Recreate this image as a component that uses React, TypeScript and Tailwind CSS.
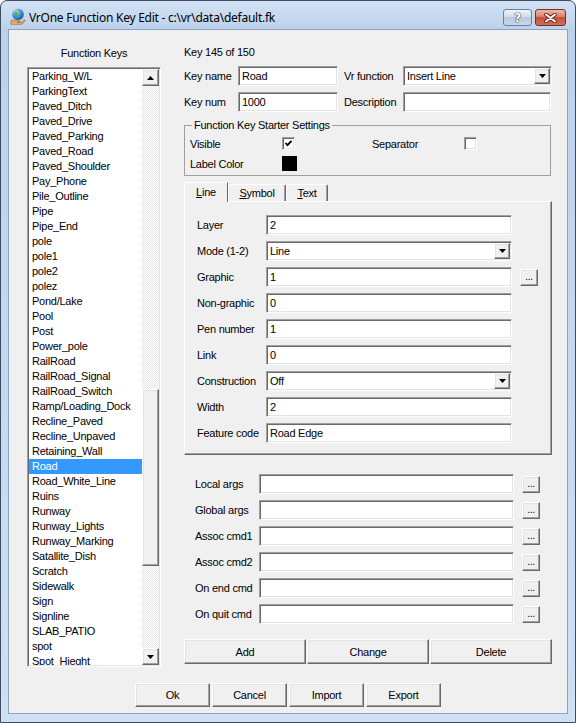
import React from "react";

// classic 3D edges
const sunken =
  "border border-t-[#a0a0a0] border-l-[#a0a0a0] border-b-white border-r-white shadow-[inset_1px_1px_0_#696969,inset_-1px_-1px_0_#e3e3e3]";
const raised =
  "border border-t-white border-l-white border-b-[#696969] border-r-[#696969] shadow-[inset_-1px_-1px_0_#a0a0a0,inset_1px_1px_0_#e3e3e3] bg-[#f0f0f0]";

const keys = [
  "Parking_W/L",
  "ParkingText",
  "Paved_Ditch",
  "Paved_Drive",
  "Paved_Parking",
  "Paved_Road",
  "Paved_Shoulder",
  "Pay_Phone",
  "Pile_Outline",
  "Pipe",
  "Pipe_End",
  "pole",
  "pole1",
  "pole2",
  "polez",
  "Pond/Lake",
  "Pool",
  "Post",
  "Power_pole",
  "RailRoad",
  "RailRoad_Signal",
  "RailRoad_Switch",
  "Ramp/Loading_Dock",
  "Recline_Paved",
  "Recline_Unpaved",
  "Retaining_Wall",
  "Road",
  "Road_White_Line",
  "Ruins",
  "Runway",
  "Runway_Lights",
  "Runway_Marking",
  "Satallite_Dish",
  "Scratch",
  "Sidewalk",
  "Sign",
  "Signline",
  "SLAB_PATIO",
  "spot",
  "Spot_Hieght",
];

const lineFields = [
  { label: "Layer", value: "2" },
  { label: "Mode (1-2)", value: "Line", combo: true },
  { label: "Graphic", value: "1", more: true },
  { label: "Non-graphic", value: "0" },
  { label: "Pen number", value: "1" },
  { label: "Link", value: "0" },
  { label: "Construction", value: "Off", combo: true },
  { label: "Width", value: "2" },
  { label: "Feature code", value: "Road Edge" },
];

const cmdRows = [
  "Local args",
  "Global args",
  "Assoc cmd1",
  "Assoc cmd2",
  "On end cmd",
  "On quit cmd",
];

function Tri({ up }: { up?: boolean }) {
  return (
    <svg width="7" height="4" viewBox="0 0 7 4">
      <path d={up ? "M3.5 0L7 4H0z" : "M0 0h7L3.5 4z"} fill="#000" />
    </svg>
  );
}

function TextBox({ value, className = "" }: { value?: string; className?: string }) {
  return (
    <div className={`${sunken} bg-white h-[20px] flex items-center pl-[3px] whitespace-nowrap ${className}`}>
      {value}
    </div>
  );
}

function Combo({ value, className = "" }: { value: string; className?: string }) {
  return (
    <div className={`${sunken} bg-white h-[20px] flex items-center ${className}`}>
      <span className="flex-1 pl-[3px]">{value}</span>
      <div className={`${raised} w-[16px] h-[16px] mr-[1px] flex items-center justify-center`}>
        <Tri />
      </div>
    </div>
  );
}

function More() {
  return (
    <div className={`${raised} w-[18px] h-[17px] flex items-end justify-center text-[10px] leading-[10px] pb-[3px]`}>
      ...
    </div>
  );
}

function CheckBox({ checked }: { checked?: boolean }) {
  return (
    <div className={`${sunken} bg-white w-[13px] h-[13px] flex items-center justify-center`}>
      {checked && (
        <svg width="9" height="9" viewBox="0 0 9 9">
          <path d="M1.5 4l2 2.2L7.5 1.8" stroke="#000" strokeWidth="1.8" fill="none" />
        </svg>
      )}
    </div>
  );
}

function AppIcon() {
  return (
    <svg width="16" height="17" viewBox="0 0 16 17">
      <defs>
        <radialGradient id="globe" cx="0.35" cy="0.3" r="0.8">
          <stop offset="0" stopColor="#bfe3ff" />
          <stop offset="0.5" stopColor="#3b8ee0" />
          <stop offset="1" stopColor="#1c4f9c" />
        </radialGradient>
      </defs>
      <circle cx="8" cy="6.5" r="5.8" fill="url(#globe)" />
      <path d="M4.5 4.5c1-1.5 2.5-1.2 3 0s-.5 2 .5 2.5 1 2-.5 2.5c-1 .3-2-1-2.5-2S3.8 5.5 4.5 4.5z" fill="#59a83a" opacity="0.85" />
      <path d="M10 3c1 .2 1.8 1 1.6 2-.3.8-1.3.5-1.6-.2z" fill="#59a83a" opacity="0.85" />
      <path d="M1 12.5c2-.8 3.5-.6 5 .2l3.5.2c1 0 1 1.2 0 1.3l-2.5.2 4.5-.4 3-2c.8-.4 1.4.4.8 1l-3.5 3.2c-.6.5-1.3.6-2 .6H1z" fill="#e2a96a" stroke="#9a6633" strokeWidth="0.6" />
    </svg>
  );
}

function TitleBar() {
  return (
    <div className="h-[28px] flex items-start shrink-0">
      <div className="ml-[9px] mt-[7px]">
        <AppIcon />
      </div>
      <div className="ml-[3px] mt-[9px] font-['Noto_Sans',sans-serif] text-[12px] leading-[16px] text-black">
        VrOne Function Key Edit - c:\vr\data\default.fk
      </div>
      <div className="ml-auto mr-[9px] mt-[8px] flex gap-[3px]">
        <div className="w-[29px] h-[17px] rounded-[3px] border border-[#6b7f99] bg-[linear-gradient(to_bottom,#eef3fa,#d3deeb_45%,#b9c9dd_50%,#c9d7e8)] flex items-center justify-center">
          <span className="font-['DejaVu_Sans',sans-serif] font-bold text-[12px] leading-[12px] text-white [text-shadow:0_0_1px_#2c3e57,0_0_1px_#2c3e57,0_0_1px_#2c3e57]">
            ?
          </span>
        </div>
        <div className="w-[31px] h-[17px] rounded-[3px] border border-[#7a2b24] bg-[linear-gradient(to_bottom,#efb8a8,#d8806a_45%,#c4503a_50%,#d0705a)] flex items-center justify-center">
          <svg width="13" height="10" viewBox="0 0 13 10">
            <path d="M2 1.5l9 7M11 1.5l-9 7" stroke="#5a1f18" strokeWidth="3.6" strokeLinecap="round" />
            <path d="M2 1.5l9 7M11 1.5l-9 7" stroke="#fff" strokeWidth="2" strokeLinecap="round" />
          </svg>
        </div>
      </div>
    </div>
  );
}

function KeyList() {
  return (
    <div className={`${sunken} bg-white w-[134px] h-[600px] p-px flex`}>
      <div className="w-[113px] overflow-hidden">
        {keys.map((k) => (
          <div
            key={k}
            className={`h-[15px] leading-[15px] pl-[3px] whitespace-nowrap ${
              k === "Road" ? "bg-[#3399ff] text-white" : ""
            }`}
          >
            {k}
          </div>
        ))}
      </div>
      <div className="w-[17px] flex flex-col">
        <div className={`${raised} h-[17px] flex items-center justify-center`}>
          <Tri up />
        </div>
        <div className="flex-1 flex flex-col bg-[repeating-conic-gradient(#ffffff_0_25%,#e6e6e6_0_50%)] bg-[length:2px_2px]">
          <div className="h-[303px]" />
          <div className={`${raised} h-[177px]`} />
        </div>
        <div className={`${raised} h-[17px] flex items-center justify-center`}>
          <Tri />
        </div>
      </div>
    </div>
  );
}

function LineTab() {
  return (
    <div className="mt-[6px]">
      {/* tab strip */}
      <div className="flex items-end h-[19px] pl-0">
        <div className="h-[20px] w-[44px] -mb-px relative z-10 bg-[#f0f0f0] border-t border-l border-white border-r border-r-[#696969] rounded-tl-[2px] flex items-center justify-center pb-[1px]">
          <span>
            <span className="underline underline-offset-[1px]">L</span>ine
          </span>
        </div>
        <div className="h-[17px] w-[58px] border-t border-l border-white border-r border-r-[#696969] shadow-[inset_-1px_0_0_#a0a0a0] rounded-t-[2px] flex items-center justify-center">
          <span>
            <span className="underline underline-offset-[1px]">S</span>ymbol
          </span>
        </div>
        <div className="h-[17px] w-[42px] border-t border-l border-white border-r border-r-[#696969] shadow-[inset_-1px_0_0_#a0a0a0] rounded-t-[2px] flex items-center justify-center">
          <span>
            <span className="underline underline-offset-[1px]">T</span>ext
          </span>
        </div>
      </div>
      {/* tab panel */}
      <div className="border border-t-white border-l-white border-b-[#696969] border-r-[#696969] shadow-[inset_-1px_-1px_0_#a0a0a0] pt-[13px] pb-[11px] pl-[12px] flex flex-col gap-[6px]">
        {lineFields.map((f) => (
          <div key={f.label} className="flex items-center h-[20px]">
            <div className="w-[69px] whitespace-nowrap">{f.label}</div>
            {f.combo ? (
              <Combo value={f.value} className="w-[246px]" />
            ) : (
              <TextBox value={f.value} className="w-[246px]" />
            )}
            {f.more && (
              <div className="ml-[8px]">
                <More />
              </div>
            )}
          </div>
        ))}
      </div>
    </div>
  );
}

export default function App() {
  return (
    <div className="w-[576px] h-[723px] flex flex-col border border-[#3c4b60] rounded-t-[7px] bg-[linear-gradient(to_bottom,#d3e2f4,#bcd2eb_28px,#c3d7ee_300px,#cfe0f3)] font-['Liberation_Sans',Arial,sans-serif] text-[11px] leading-[14px] tracking-[-0.25px] text-black overflow-hidden">
      <TitleBar />
      <div className="mx-[7px] h-[685px] border border-[#8aa3c2] bg-[#f0f0f0] flex flex-col">
        <div className="flex h-[637px]">
          {/* left: key list */}
          <div className="ml-[18px] w-[134px] flex flex-col">
            <div className="mt-[16px] text-center">Function Keys</div>
            <div className="mt-[7px]">
              <KeyList />
            </div>
          </div>

          {/* right: key details */}
          <div className="ml-[23px] w-[368px] flex flex-col">
            <div className="mt-[15px]">Key 145 of 150</div>

            <div className="mt-[7px] flex items-center h-[20px]">
              <div className="w-[54px]">Key name</div>
              <TextBox value="Road" className="w-[100px]" />
              <div className="ml-[6px] w-[59px]">Vr function</div>
              <Combo value="Insert Line" className="w-[149px]" />
            </div>

            <div className="mt-[6px] flex items-center h-[20px]">
              <div className="w-[54px]">Key num</div>
              <TextBox value="1000" className="w-[100px]" />
              <div className="ml-[6px] w-[59px]">Description</div>
              <TextBox className="w-[148px]" />
            </div>

            <fieldset className="mt-[6px] w-[367px] border border-[#a0a0a0] pl-[5px] pb-[4px]">
              <legend className="ml-[2px] px-[2px] leading-[14px]">Function Key Starter Settings</legend>
              <div className="mt-[5px] flex items-center h-[13px]">
                <div className="w-[92px]">Visible</div>
                <CheckBox checked />
                <div className="ml-[77px] w-[92px]">Separator</div>
                <CheckBox />
              </div>
              <div className="mt-[6px] flex items-center h-[15px]">
                <div className="w-[92px]">Label Color</div>
                <div className="w-[15px] h-[15px] bg-black" />
              </div>
            </fieldset>

            <LineTab />

            <div className="mt-[19px] pl-[11px] flex flex-col gap-[6px]">
              {cmdRows.map((r) => (
                <div key={r} className="flex items-center h-[20px]">
                  <div className="w-[64px] whitespace-nowrap">{r}</div>
                  <TextBox className="w-[255px]" />
                  <div className="ml-[8px]">
                    <More />
                  </div>
                </div>
              ))}
            </div>

            <div className="mt-[15px] flex gap-[1px]">
              {["Add", "Change", "Delete"].map((b) => (
                <div key={b} className={`${raised} w-[122px] h-[25px] flex items-center justify-center`}>
                  {b}
                </div>
              ))}
            </div>
          </div>
        </div>

        {/* dialog buttons */}
        <div className="mt-[16px] flex justify-center gap-[2px]">
          {["Ok", "Cancel", "Import", "Export"].map((b) => (
            <div key={b} className={`${raised} w-[75px] h-[24px] flex items-center justify-center`}>
              {b}
            </div>
          ))}
        </div>
      </div>
    </div>
  );
}
